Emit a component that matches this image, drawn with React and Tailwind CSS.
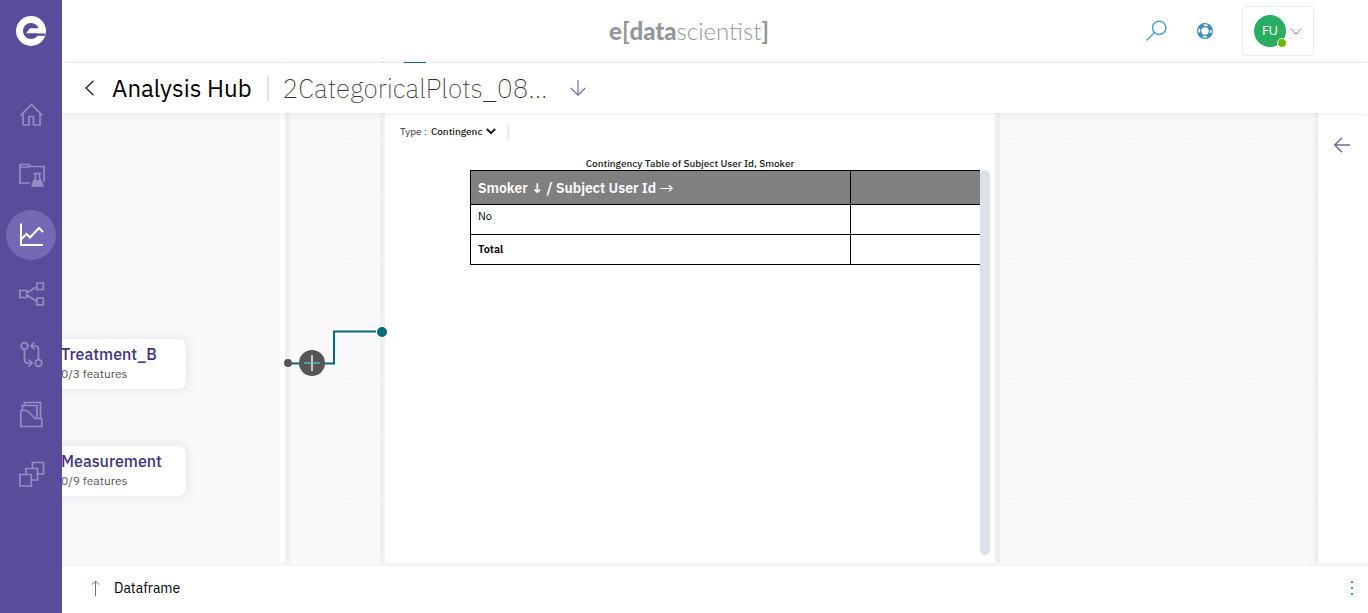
import React from 'react';

const navItems = [
  {
    label: 'Home',
    art: <path d="M2.500 13.500 13.500 2.500l11 11M5 11.500V23h6v-8.500h4.500V23H22V11.500" />,
  },
  {
    label: 'Projects',
    art: (
      <>
        <path d="M12 21H2V2.500h9l1 2h14V19.500M2 5h9l1.200-1.500" />
        <path d="M15.500 11.500h8M17.500 12v4l-2.800 7.500h9.600L21.500 16v-4" />
        <path d="M15.800 19h7.400l1.500 5H14.300z" fill="currentColor" />
      </>
    ),
  },
  {
    label: 'Analysis Hub',
    active: true,
    art: (
      <>
        <path d="M3 1.500v21.500H25" strokeWidth="2" />
        <path d="M3 17.500l5.500-5.500 3.500 3.500L21 6l4 4" strokeWidth="2" />
      </>
    ),
  },
  {
    label: 'Pipelines',
    art: <path d="M1.800 8.500h7v7h-7zM18.800 1h6.500v6.500h-6.500zM18.800 16h6.500v6.800h-6.500zM8.800 11l10-6.500M8.800 13l10 6.500" />,
  },
  {
    label: 'Compare',
    art: (
      <>
        <circle cx="6.500" cy="4" r="3.300" />
        <circle cx="20.500" cy="21" r="3.300" />
        <path d="M6.500 7.300v10.400q0 3.300 3.300 3.300H13.500M10.500 17.500l3.500 3.500L10.500 24.500M20.500 17.700V7.300q0-3.300-3.300-3.300H13M16.500.5l-3.500 3.500L16.500 7.500" />
      </>
    ),
  },
  {
    label: 'Library',
    art: <path d="M2.800 8.500h6l8.500 8h6.500v8h-21zM4.500 8V3.500H19V16M6.500 3.500V.5h16V16" />,
  },
  {
    label: 'Modules',
    art: <path d="M1.800 12.500h11.500V24H1.800zM8 12.500V6.500h11.500v11.500H13.500M14.500 6.500V.5h11V12h-6" />,
  },
];

function Sidebar() {
  return (
    <aside className="z-20 flex w-[62px] shrink-0 flex-col items-center bg-[#594d9b]">
      <a href="#home" aria-label="e" className="mt-4">
        <svg width="30" height="30" viewBox="0 0 30 30">
          <circle cx="15" cy="15" r="15" fill="#fff" />
          <circle cx="15" cy="15" r="8" fill="#594d9b" />
          <path d="M13.800 12.200h9.500L29.800 17.400H10z" fill="#fff" />
          <path d="M23 9.500h5v8h-6z" fill="#fff" />
          <path d="M9.500 17.600H29.700l-.6 2.200h-8.300l-2.300 1.200h-8z" fill="#594d9b" />
        </svg>
      </a>
      <nav className="mt-11 flex flex-col gap-[10px]">
        {navItems.map((item) => (
          <a
            key={item.label}
            href="#nav"
            aria-label={item.label}
            className={
              item.active
                ? 'flex h-[50px] w-[50px] items-center justify-center rounded-full bg-[#7568b5] text-white'
                : 'flex h-[50px] w-[50px] items-center justify-center text-[#958dc2]'
            }
          >
            <svg width="26" height="26" viewBox="0 0 26 26" fill="none" stroke="currentColor" strokeWidth="1.700" className="overflow-visible">
              {item.art}
            </svg>
          </a>
        ))}
      </nav>
    </aside>
  );
}

function Header() {
  return (
    <header className="grid h-[62px] shrink-0 grid-cols-[1fr_auto_1fr] items-center bg-white">
      <span />
      <div className="mr-[52px] flex items-center font-['Lato',sans-serif] text-2xl leading-8 text-[#939699]">
        <b className="font-black">e</b>
        <span className="font-bold">[</span>
        <b className="font-black">data</b>
        <span className="font-light">scientist</span>
        <span className="font-bold">]</span>
      </div>
      <div className="mr-[54px] flex items-center justify-end">
        <button aria-label="Search" className="mr-[29px]">
          <svg width="22" height="22" viewBox="0 0 22 22" fill="none" stroke="#45a0d2" strokeWidth="1.400">
            <circle cx="13.200" cy="7.800" r="6.700" />
            <path d="M8.500 12.500.5 20.500" />
          </svg>
        </button>
        <button aria-label="Help" className="mr-[29px]">
          <svg width="16" height="16" viewBox="0 0 16 16" fill="none" stroke="#3d8fbf">
            <circle cx="8" cy="8" r="7.400" strokeWidth="1.200" />
            <circle cx="8" cy="8" r="4.400" strokeWidth="1.200" />
            <circle cx="8" cy="8" r="5.900" strokeWidth="3.400" strokeDasharray="5.270 4" strokeDashoffset="-2" />
          </svg>
        </button>
        <button className="flex h-[50px] w-[72px] items-center rounded border border-[#ebebeb] pl-[11px]">
          <span className="relative flex h-8 w-8 items-center justify-center rounded-full bg-[#29ae61] font-['Open_Sans',sans-serif] text-[13px] text-white">
            FU
            <span className="absolute -right-px -bottom-px h-[10px] w-[10px] rounded-full border border-white bg-[#6bb700]" />
          </span>
          <svg className="ml-1" width="12" height="7" viewBox="0 0 12 7" fill="none" stroke="#999">
            <path d="M.5.5 6 6 11.500.5" />
          </svg>
        </button>
      </div>
    </header>
  );
}

function TitleBar() {
  return (
    <div className="z-10 flex h-[50px] shrink-0 items-center bg-white pl-[22px] shadow-[0_1px_8px_rgba(0,0,0,0.08)]">
      <button aria-label="Back">
        <svg width="10" height="16" viewBox="0 0 10 16" fill="none" stroke="#222" strokeWidth="1.300">
          <path d="M9.500 .8 2 8 9.500 15.200" />
        </svg>
      </button>
      <h1 className="ml-[18px] text-2xl text-black">Analysis Hub</h1>
      <span className="ml-[15px] h-[25px] w-[2px] bg-[#dfe3e8]" />
      <h2 className="ml-[14px] text-[26px] leading-8 font-extralight text-[#333]">2CategoricalPlots_08...</h2>
      <button aria-label="Download" className="ml-[22px]">
        <svg width="16" height="16" viewBox="0 0 16 16" fill="none" stroke="#7669b4" strokeWidth="1.200">
          <path d="M8 0v15M.8 8 8 15.200 15.200 8" />
        </svg>
      </button>
    </div>
  );
}

function FeatureNode({ title, detail, place }) {
  return (
    <div className={'absolute -left-10 h-[50px] w-[164px] rounded-lg bg-white pt-1 pl-[39px] shadow-[0_0_8px_3px_rgba(225,230,236,0.7)] ' + place}>
      <div className="text-base leading-[22px] font-medium text-[#40347f]">{title}</div>
      <div className="text-xs leading-[18px] text-[#555]">{detail}</div>
    </div>
  );
}

const gridPaper =
  'bg-[#f9f9fb] bg-[linear-gradient(#f6f6f7_2px,transparent_2px),linear-gradient(90deg,#f6f6f7_2px,transparent_2px)] bg-[size:60px_60px]';

function Connector() {
  return (
    <>
      <svg className="absolute top-[210px] -left-1.5 z-10" width="104" height="60" viewBox="0 0 104 60" fill="none">
        <path d="M4 40.500h46v-32h42" stroke="#056c74" strokeWidth="2" />
        <circle cx="4" cy="40" r="4" fill="#545454" />
        <circle cx="98" cy="9" r="5" fill="#056c74" />
      </svg>
      <button
        aria-label="Add step"
        className="absolute top-[237px] left-[9px] z-10 flex h-[26px] w-[26px] items-center justify-center rounded-full bg-[#555]"
      >
        <svg width="16" height="16" viewBox="0 0 16 16">
          <path d="M8 0v16" stroke="#e8e8e8" strokeWidth="1.600" />
          <path d="M0 8h16" stroke="#5fc0c4" strokeWidth="1.400" />
        </svg>
      </button>
    </>
  );
}

function PlotPanel() {
  return (
    <section className="flex w-[620px] shrink-0 flex-col border-x-[5px] border-[#edf1f4] bg-white">
      <div className="flex h-[37px] shrink-0 items-center pl-[15px] text-[10px] text-[#333]">
        <label htmlFor="plot-type">Type :</label>
        <span className="ml-1 flex items-center">
          <select id="plot-type" className="w-[52px] appearance-none overflow-hidden bg-transparent font-medium text-[#222]">
            <option>Contingenc</option>
          </select>
          <svg className="ml-[3px]" width="10" height="8" viewBox="0 0 10 8" fill="none" stroke="#222" strokeWidth="2">
            <path d="M.8 1l4.200 4 4.200-4" />
          </svg>
        </span>
        <span className="ml-[11px] h-[14px] w-[3px] bg-[#ebeff3]" />
      </div>
      <div id="table-title" className="pt-[8px] text-center text-[10px] leading-[12px] font-medium text-[#222]">
        Contingency Table of Subject User Id, Smoker
      </div>
      <div className="mb-2 flex min-h-0 grow pr-[5px] pl-[85px]">
        <div className="min-w-0 grow overflow-hidden">
          <table aria-labelledby="table-title" className="w-[760px] table-fixed border-collapse text-left text-[11px] text-black [&_td]:border [&_td]:border-black [&_td]:px-[7px] [&_th]:border [&_th]:border-black [&_th]:px-[7px]">
            <thead>
              <tr className="h-[34px] bg-[#808080] text-sm text-white">
                <th className="font-semibold">
                  Smoker ↓ / Subject User Id <span className="font-['Noto_Sans_CJK_JP',sans-serif] leading-none font-normal">→</span>
                </th>
                <th />
              </tr>
            </thead>
            <tbody>
              <tr className="h-[30px]">
                <td className="pb-[6px]">No</td>
                <td />
              </tr>
              <tr className="h-[30px] font-semibold">
                <td>Total</td>
                <td />
              </tr>
            </tbody>
          </table>
        </div>
        <div className="w-[10px] shrink-0 rounded-full bg-[#dce1e9]" />
      </div>
    </section>
  );
}

export default function App() {
  return (
    <div className="flex h-screen overflow-hidden bg-white font-['IBM_Plex_Sans','Inter',sans-serif]">
      <Sidebar />
      <div className="flex min-w-0 grow flex-col">
        <Header />
        <div className="flex h-px shrink-0 bg-[#f1f1f1]">
          <span className="ml-[223px] w-[5px] bg-[#e2e5e8]" />
          <span className="ml-[90px] w-[5px] bg-[#e2e5e8]" />
          <span className="ml-[19px] w-[22px] bg-[#056c74]" />
        </div>
        <TitleBar />
        <main className="flex min-h-0 grow">
          <div className="relative w-[223px] shrink-0 overflow-hidden border-r-[5px] border-white bg-[#f9f9f9]">
            <FeatureNode title="Treatment_B" detail="0/3 features" place="top-[226px]" />
            <FeatureNode title="Measurement" detail="0/9 features" place="top-[333px]" />
          </div>
          <div className={'relative w-[95px] shrink-0 border-l-[5px] border-[#edf1f4] bg-[position:-1px_25px] ' + gridPaper}>
            <Connector />
          </div>
          <PlotPanel />
          <div className={'min-w-0 grow bg-[position:9px_25px] shadow-[inset_-8px_0_6px_-6px_rgba(0,0,0,0.08)] ' + gridPaper} />
          <div className="flex w-[50px] shrink-0 items-start justify-center bg-white pt-6 pr-[2px]">
            <button aria-label="Open panel">
              <svg width="16" height="16" viewBox="0 0 16 16" fill="none" stroke="#7064ab" strokeWidth="1.400">
                <path d="M16 8H1M8 .8.8 8 8 15.200" />
              </svg>
            </button>
          </div>
        </main>
        <footer className="flex h-[50px] shrink-0 items-center border-t-[3px] border-[#f3f4f5] bg-white pr-[14px] pb-[3px] pl-[29px]">
          <button className="flex items-center gap-[14px] text-sm text-black">
            <svg width="9" height="16" viewBox="0 0 9 16" fill="none" stroke="#7064ab">
              <path d="M4.500 16V1M.8 4.700 4.500 1l3.700 3.700" />
            </svg>
            Dataframe
          </button>
          <button aria-label="More" className="ml-auto">
            <svg width="4" height="14" viewBox="0 0 4 14" fill="#3793d2">
              <path d="M1 0h2v2H1zM1 6h2v2H1zM1 12h2v2H1z" />
            </svg>
          </button>
        </footer>
      </div>
    </div>
  );
}
